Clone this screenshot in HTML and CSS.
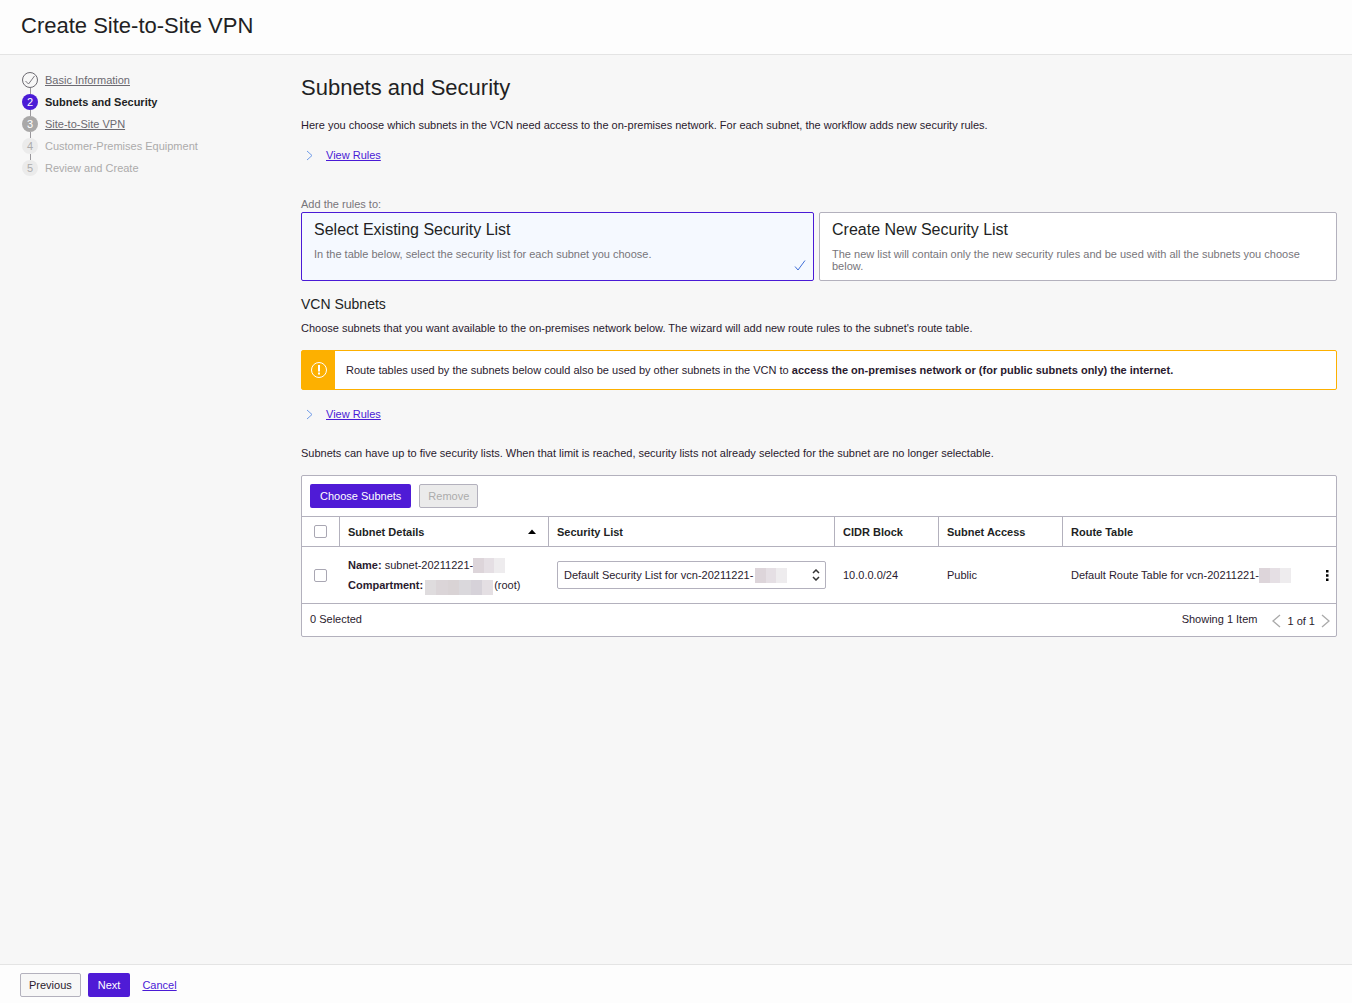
FILE: index.html
```html
<!DOCTYPE html>
<html lang="en">
<head>
<meta charset="utf-8">
<meta name="viewport" content="width=device-width, initial-scale=1">
<title>Create Site-to-Site VPN</title>
<link rel="stylesheet" href="styles.css">
</head>
<body>
<header class="page-header">
  <h1 class="title">Create Site-to-Site VPN</h1>
</header>

<div class="workspace">
  <nav class="sidebar" aria-label="Wizard steps">
    <ol class="steps">
      <li class="step step-done">
        <span class="bullet"><svg width="16" height="16" viewBox="0 0 16 16" fill="none" stroke="#6b6970"><circle cx="8" cy="8" r="7.5"/><path d="M3.5 9l3 3 6-8" stroke-width=".9"/></svg></span>
        <a href="#">Basic Information</a>
      </li>
      <li class="step step-current" aria-current="step"><span class="bullet">2</span><span>Subnets and Security</span></li>
      <li class="step step-next"><span class="bullet">3</span><a href="#">Site-to-Site VPN</a></li>
      <li class="step step-off"><span class="bullet">4</span><span>Customer-Premises Equipment</span></li>
      <li class="step step-off"><span class="bullet">5</span><span>Review and Create</span></li>
    </ol>
  </nav>

  <main class="content">
    <h2 class="title">Subnets and Security</h2>
    <p class="intro">Here you choose which subnets in the VCN need access to the on-premises network. For each subnet, the workflow adds new security rules.</p>
    <div class="disclosure">
      <svg width="8" height="12" viewBox="0 0 8 12" fill="none" stroke="#6f9be8"><path d="M1 2l5 4.500-5 4.500"/></svg>
      <a href="#">View Rules</a>
    </div>

    <fieldset class="choice">
      <legend>Add the rules to:</legend>
      <div class="cards">
        <label class="card">
          <input type="radio" name="list-mode" class="card-input" checked>
          <span class="card-title">Select Existing Security List</span>
          <span class="card-text">In the table below, select the security list for each subnet you choose.</span>
          <svg class="card-check" width="12" height="12" viewBox="0 0 12 12" fill="none" stroke="#3f6fd8"><path d="M1 7.5l3 3.500L11 1.500"/></svg>
        </label>
        <label class="card">
          <input type="radio" name="list-mode" class="card-input">
          <span class="card-title">Create New Security List</span>
          <span class="card-text">The new list will contain only the new security rules and be used with all the subnets you choose below.</span>
        </label>
      </div>
    </fieldset>

    <h3 class="subtitle">VCN Subnets</h3>
    <p class="lead">Choose subnets that you want available to the on-premises network below. The wizard will add new route rules to the subnet's route table.</p>

    <div class="alert" role="note">
      <span class="alert-icon"><svg width="18" height="18" viewBox="0 0 18 18" fill="none" stroke="#fff"><circle cx="9" cy="9" r="7.5"/><path d="M9 4v6.500M9 11.500v2" stroke-width="2"/></svg></span>
      <p class="alert-text">Route tables used by the subnets below could also be used by other subnets in the VCN to <strong>access the on-premises network or (for public subnets only) the internet.</strong></p>
    </div>

    <div class="disclosure">
      <svg width="8" height="12" viewBox="0 0 8 12" fill="none" stroke="#6f9be8"><path d="M1 2l5 4.500-5 4.500"/></svg>
      <a href="#">View Rules</a>
    </div>
    <p class="limit">Subnets can have up to five security lists. When that limit is reached, security lists not already selected for the subnet are no longer selectable.</p>

    <section class="panel">
      <div class="toolbar">
        <button type="button" class="btn btn-primary">Choose Subnets</button>
        <button type="button" class="btn" disabled>Remove</button>
      </div>
      <table class="subnets">
        <colgroup>
          <col class="col-check"><col class="col-details"><col class="col-list"><col class="col-cidr"><col class="col-access"><col><col class="col-menu">
        </colgroup>
        <thead>
          <tr>
            <th class="cell-check"><input type="checkbox" class="tick" aria-label="Select all"></th>
            <th aria-sort="ascending"><span class="sorted">Subnet Details <svg width="8" height="5" viewBox="0 0 8 5"><path d="M0 5l4-4.500L8 5z"/></svg></span></th>
            <th>Security List</th>
            <th>CIDR Block</th>
            <th>Subnet Access</th>
            <th colspan="2">Route Table</th>
          </tr>
        </thead>
        <tbody>
          <tr>
            <td class="cell-check"><input type="checkbox" class="tick" aria-label="Select subnet"></td>
            <td>
              <div class="detail"><strong>Name:</strong>&nbsp;subnet-20211221-<span class="mask mask-short"></span></div>
              <div class="detail"><strong>Compartment:</strong><span class="mask mask-long"></span>(root)</div>
            </td>
            <td>
              <div class="picker">
                <select aria-label="Security list"><option>Default Security List for vcn-20211221-</option></select>
                <span class="mask mask-short picker-mask"></span>
                <svg class="picker-arrows" width="8" height="12" viewBox="0 0 8 12" fill="none" stroke="#333" stroke-width="1.500"><path d="M1 4l3-3 3 3M1 8l3 3 3-3"/></svg>
              </div>
            </td>
            <td>10.0.0.0/24</td>
            <td>Public</td>
            <td><div class="detail">Default Route Table for vcn-20211221-<span class="mask mask-short"></span></div></td>
            <td class="cell-menu"><button type="button" class="icon-btn" aria-label="Actions"><svg width="3" height="11" viewBox="0 0 3 11"><path d="M0 0h2.500v2.500H0zM0 4.250h2.500v2.500H0zM0 8.500h2.500V11H0z"/></svg></button></td>
          </tr>
        </tbody>
      </table>
      <div class="panel-footer">
        <span>0 Selected</span>
        <span class="showing">Showing 1 Item</span>
        <div class="pager">
          <button type="button" class="icon-btn" aria-label="Previous page"><svg width="9" height="14" viewBox="0 0 9 14" fill="none" stroke="#aaa" stroke-width="1.300"><path d="M8 1L1 7l7 6"/></svg></button>
          <span>1 of 1</span>
          <button type="button" class="icon-btn" aria-label="Next page"><svg width="9" height="14" viewBox="0 0 9 14" fill="none" stroke="#aaa" stroke-width="1.300"><path d="M1 1l7 6-7 6"/></svg></button>
        </div>
      </div>
    </section>
  </main>
</div>

<footer class="page-footer">
  <button type="button" class="btn btn-plain">Previous</button>
  <button type="button" class="btn btn-primary">Next</button>
  <a href="#" class="cancel">Cancel</a>
</footer>
</body>
</html>
```
FILE: styles.css
```css
* { box-sizing: border-box; }

body {
  margin: 0;
  min-height: 100vh;
  display: flex;
  flex-direction: column;
  background: #f7f7f7;
  color: #2a1a2e;
  font: 11px/12px "Liberation Sans", Arial, sans-serif;
}

h1, h2, h3, p, ol { margin: 0; padding: 0; }
svg { display: block; flex: none; }
a { color: #4a1bd6; }
button, select { font: inherit; color: inherit; }

.title { font-size: 22px; line-height: 26px; font-weight: 400; color: #221f24; }

.page-header {
  padding: 13px 21px 15px;
  background: #fdfdfd;
  border-bottom: 1px solid #e4e4e4;
}

.workspace { flex: 1; display: flex; }
.sidebar { flex: 0 0 301px; padding: 17px 22px; }
.content { flex: 1; min-width: 0; padding: 20px 15px 20px 0; }

/* Wizard steps */
.steps { list-style: none; display: grid; gap: 6px; }
.step { position: relative; display: flex; align-items: center; gap: 7px; height: 16px; }
.step:not(:last-child)::after {
  content: "";
  position: absolute;
  left: 8px;
  top: 16px;
  height: 6px;
  border-left: 1px solid #9a989c;
}
.bullet {
  width: 16px;
  height: 16px;
  border-radius: 50%;
  line-height: 16px;
  text-align: center;
}
.step-done a, .step-next a { color: #6b6970; }
.step-current { font-weight: 700; color: #221f24; }
.step-current .bullet { background: #4a1bd6; color: #fff; font-weight: 400; }
.step-next .bullet { background: #a9a8a8; color: #fff; }
.step-off { color: #acabab; }
.step-off .bullet { background: #ebebeb; }

/* Main copy */
.intro { margin-top: 18px; }
.disclosure { display: flex; align-items: center; gap: 12px; margin-top: 18px; padding-left: 5px; }
.choice { border: 0; margin: 36px 0 0; padding: 0; min-width: 0; }
.choice legend { padding: 0 0 1px; line-height: 14px; color: #77757a; }
.subtitle { margin-top: 14px; font-size: 14px; line-height: 18px; font-weight: 400; color: #221f24; }
.lead { margin-top: 9px; }
.limit { margin-top: 27px; }

.cards { display: grid; grid-template-columns: 513fr 518fr; gap: 5px; }
.card {
  position: relative;
  display: flex;
  flex-direction: column;
  gap: 9px;
  min-height: 69px;
  padding: 8px 24px 7px 12px;
  background: #fff;
  border: 1px solid #b3b1bd;
  border-radius: 2px;
}
.card:has(:checked) { background: #f5f9ff; border-color: #4a1bd6; }
.card-input { position: absolute; opacity: 0; margin: 0; }
.card-title { font-size: 16px; line-height: 18px; color: #221f24; }
.card-text { color: #77757a; }
.card-check { position: absolute; right: 7px; bottom: 9px; }

.alert {
  display: flex;
  margin-top: 16px;
  min-height: 40px;
  background: #fff;
  border: 1px solid #fdb000;
  border-radius: 2px;
}
.alert-icon { flex: 0 0 33px; display: grid; place-items: center; padding-left: 1px; background: #fdb000; }
.alert-text { align-self: center; padding: 0 11px; }

/* Buttons */
.btn {
  height: 24px;
  padding: 0 8px;
  border: 1px solid #b3b1bd;
  border-radius: 2px;
  background: #f7f7f7;
}
.btn-primary { padding: 0 10px; border: 0; background: #4f1bd6; color: #fff; }
.btn:disabled { background: #ebebeb; color: #acabab; }
.icon-btn { display: block; padding: 0; border: 0; background: none; }

/* Subnet table */
.panel {
  margin-top: 16px;
  background: #fff;
  border: 1px solid #b3b1bd;
  border-radius: 2px;
}
.toolbar { display: flex; gap: 8px; padding: 8px; }
.subnets { width: 100%; table-layout: fixed; border-collapse: separate; border-spacing: 0; }
.col-check { width: 38px; }
.col-details { width: 209px; }
.col-list { width: 286px; }
.col-cidr { width: 104px; }
.col-access { width: 124px; }
.col-menu { width: 18px; }
.subnets th, .subnets td { padding: 0 8px; text-align: left; border-bottom: 1px solid #b3b1bd; }
.subnets th { height: 31px; border-top: 1px solid #b3b1bd; color: #221f24; }
.subnets th:not(:last-child) { border-right: 1px solid #b3b1bd; }
.subnets td { height: 57px; }
.subnets .cell-check { padding: 0 12px; }
.subnets .cell-menu { padding: 0 7px 0 8px; }
.sorted { display: flex; align-items: center; justify-content: space-between; padding-right: 4px; }
.tick {
  appearance: none;
  display: block;
  width: 13px;
  height: 13px;
  margin: 0;
  border: 1px solid #a9a7b3;
  border-radius: 2px;
  background: #fff;
}
.tick:checked { background: #4a1bd6; }
.detail { display: flex; align-items: center; height: 20px; white-space: nowrap; }

/* Pixelated blocks that hide private names */
.mask { display: block; flex: none; }
.mask-short {
  width: 32px;
  height: 15px;
  background: linear-gradient(90deg, #ddd5da 11px, #e5dfe4 11px 21px, #eeecee 21px);
}
.mask-long {
  width: 68px;
  height: 15px;
  margin: 4px 1px 0 2px;
  background: linear-gradient(90deg, #dfdcde 11px, #dbd5d8 11px 23px, #d9d3d5 23px 34px, #dad8dc 34px 46px, #d6d2d9 46px 57px, #e4dfe3 57px);
}

.picker { position: relative; width: 269px; }
.picker select {
  appearance: none;
  display: block;
  width: 100%;
  height: 28px;
  padding: 0 20px 0 6px;
  border: 1px solid #b3b1bd;
  border-radius: 2px;
  background: #fff;
}
.picker-mask { position: absolute; left: 198px; top: 7px; }
.picker-arrows { position: absolute; right: 6px; top: 8px; }

.panel-footer { display: flex; align-items: center; height: 32px; padding: 0 6px 3px 8px; }
.showing { margin-left: auto; }
.pager { display: flex; align-items: center; gap: 6px; margin-left: 15px; padding-top: 5px; }

.page-footer {
  display: flex;
  align-items: center;
  gap: 7px;
  padding: 8px 20px 6px;
  background: #fdfdfd;
  border-top: 1px solid #e4e4e4;
}
.cancel { margin-left: 5px; }
```
